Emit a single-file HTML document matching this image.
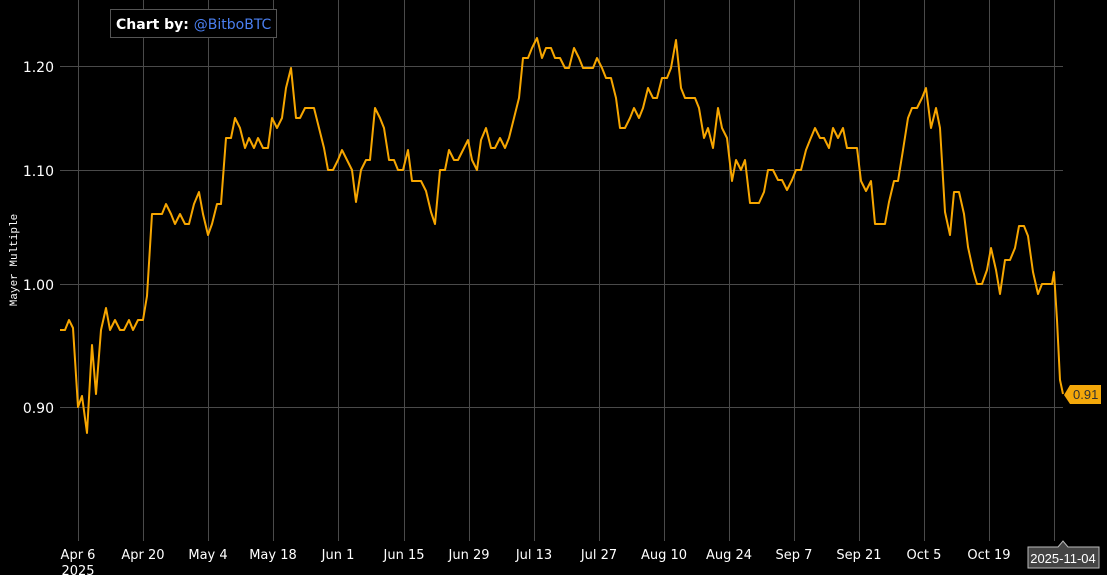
<!DOCTYPE html><html><head><style>body{margin:0;background:#000;width:1107px;height:575px;overflow:hidden;font-family:"DejaVu Sans","Liberation Sans",sans-serif}</style></head><body>
<svg width="1107" height="575" xmlns="http://www.w3.org/2000/svg" style="position:absolute;left:0;top:0">
<g stroke="#4a4a4a" stroke-width="1">
<line x1="78.5" y1="0" x2="78.5" y2="541"/><line x1="143.5" y1="0" x2="143.5" y2="541"/><line x1="208.5" y1="0" x2="208.5" y2="541"/><line x1="273.5" y1="0" x2="273.5" y2="541"/><line x1="338.5" y1="0" x2="338.5" y2="541"/><line x1="404.5" y1="0" x2="404.5" y2="541"/><line x1="469.5" y1="0" x2="469.5" y2="541"/><line x1="534.5" y1="0" x2="534.5" y2="541"/><line x1="599.5" y1="0" x2="599.5" y2="541"/><line x1="664.5" y1="0" x2="664.5" y2="541"/><line x1="729.5" y1="0" x2="729.5" y2="541"/><line x1="794.5" y1="0" x2="794.5" y2="541"/><line x1="859.5" y1="0" x2="859.5" y2="541"/><line x1="924.5" y1="0" x2="924.5" y2="541"/><line x1="989.5" y1="0" x2="989.5" y2="541"/><line x1="1054.5" y1="0" x2="1054.5" y2="541"/>
<line x1="60" y1="66.5" x2="1063" y2="66.5"/><line x1="60" y1="170.5" x2="1063" y2="170.5"/><line x1="60" y1="284.5" x2="1063" y2="284.5"/><line x1="60" y1="407.5" x2="1063" y2="407.5"/>
</g>
<g fill="#fff" font-size="14" text-anchor="end"><text x="54" y="72">1.20</text><text x="54" y="176">1.10</text><text x="54" y="290">1.00</text><text x="54" y="413">0.90</text></g>
<text transform="translate(17,260) rotate(-90)" fill="#fff" font-family="Liberation Mono,monospace" font-size="11" text-anchor="middle">Mayer Multiple</text>
<g fill="#fff" font-size="13" text-anchor="middle"><text x="78" y="559">Apr 6</text><text x="78" y="575">2025</text><text x="143" y="559">Apr 20</text><text x="208" y="559">May 4</text><text x="273" y="559">May 18</text><text x="338" y="559">Jun 1</text><text x="404" y="559">Jun 15</text><text x="469" y="559">Jun 29</text><text x="534" y="559">Jul 13</text><text x="599" y="559">Jul 27</text><text x="664" y="559">Aug 10</text><text x="729" y="559">Aug 24</text><text x="794" y="559">Sep 7</text><text x="859" y="559">Sep 21</text><text x="924" y="559">Oct 5</text><text x="989" y="559">Oct 19</text></g>
<polyline fill="none" stroke="#f7a600" stroke-width="2" stroke-linejoin="round" points="60,330 65,330 69,320 73,328 78,407 82,396 87,433 92,345 96,394 101,330 106,308 110,330 115,320 120,330 124,330 129,320 133,330 138,320 143,320 147,296 152,214 157,214 162,214 166,204 171,214 175,224 180,214 185,224 189,224 194,204 199,192 203,214 208,235 212,224 217,204 221,204 226,138 231,138 235,118 240,128 245,148 249,138 254,148 258,138 263,148 268,148 272,118 277,128 282,118 286,88 291,68 296,118 300,118 305,108 310,108 314,108 319,128 324,148 328,170 333,170 338,160 342,150 347,160 352,170 356,202 361,170 366,160 370,160 375,108 380,118 384,128 389,160 394,160 398,170 403,170 408,150 412,181 417,181 421,181 426,191 431,212 435,224 440,170 445,170 449,150 454,160 458,160 463,150 468,140 472,160 477,170 481,140 486,128 491,148 495,148 500,138 505,148 509,138 514,118 519,98 523,58 528,58 532,48 537,38 542,58 546,48 551,48 555,58 560,58 565,68 569,68 574,48 579,58 583,68 588,68 593,68 597,58 602,68 606,78 611,78 616,98 620,128 625,128 630,118 634,108 639,118 643,108 648,88 653,98 657,98 662,78 667,78 671,68 676,40 681,88 685,98 690,98 695,98 699,108 704,138 708,128 713,148 718,108 722,128 727,138 732,181 736,160 741,170 745,160 750,203 755,203 759,203 764,192 768,170 773,170 778,180 782,180 787,190 792,180 796,170 801,170 806,150 810,140 815,128 820,138 824,138 829,148 833,128 838,138 843,128 847,148 852,148 857,148 861,181 866,191 871,181 875,224 880,224 885,224 889,202 894,181 898,181 903,150 908,118 912,108 917,108 922,98 926,88 931,128 936,108 940,128 945,212 950,235 954,192 959,192 964,214 968,247 973,270 977,284 982,284 987,270 991,248 996,270 1000,294 1005,260 1010,260 1015,248 1019,226 1024,226 1028,236 1033,272 1038,294 1042,284 1047,284 1052,284 1054,272 1057,320 1060,380 1063,394"/>
<path d="M1064,395 L1070,385 L1101,385 L1101,404 L1070,404 Z" fill="#f4a80a"/>
<text x="1073" y="399" font-size="13" fill="#333" font-family="Liberation Sans,sans-serif">0.91</text>
<path d="M1028,547 L1058,547 L1063,541 L1068,547 L1099,547 L1099,568 L1028,568 Z" fill="#444" stroke="#bbb" stroke-width="1"/>
<text x="1063" y="563" font-size="13" fill="#fff" text-anchor="middle" font-family="Liberation Sans,sans-serif">2025-11-04</text>
<rect x="110.5" y="9.5" width="166" height="28" fill="#000" stroke="#555"/>
<text x="116" y="29" font-size="14" font-weight="bold" fill="#fff">Chart by: <tspan font-weight="normal" fill="#4a7ff0">@BitboBTC</tspan></text>
</svg>
</body></html>
